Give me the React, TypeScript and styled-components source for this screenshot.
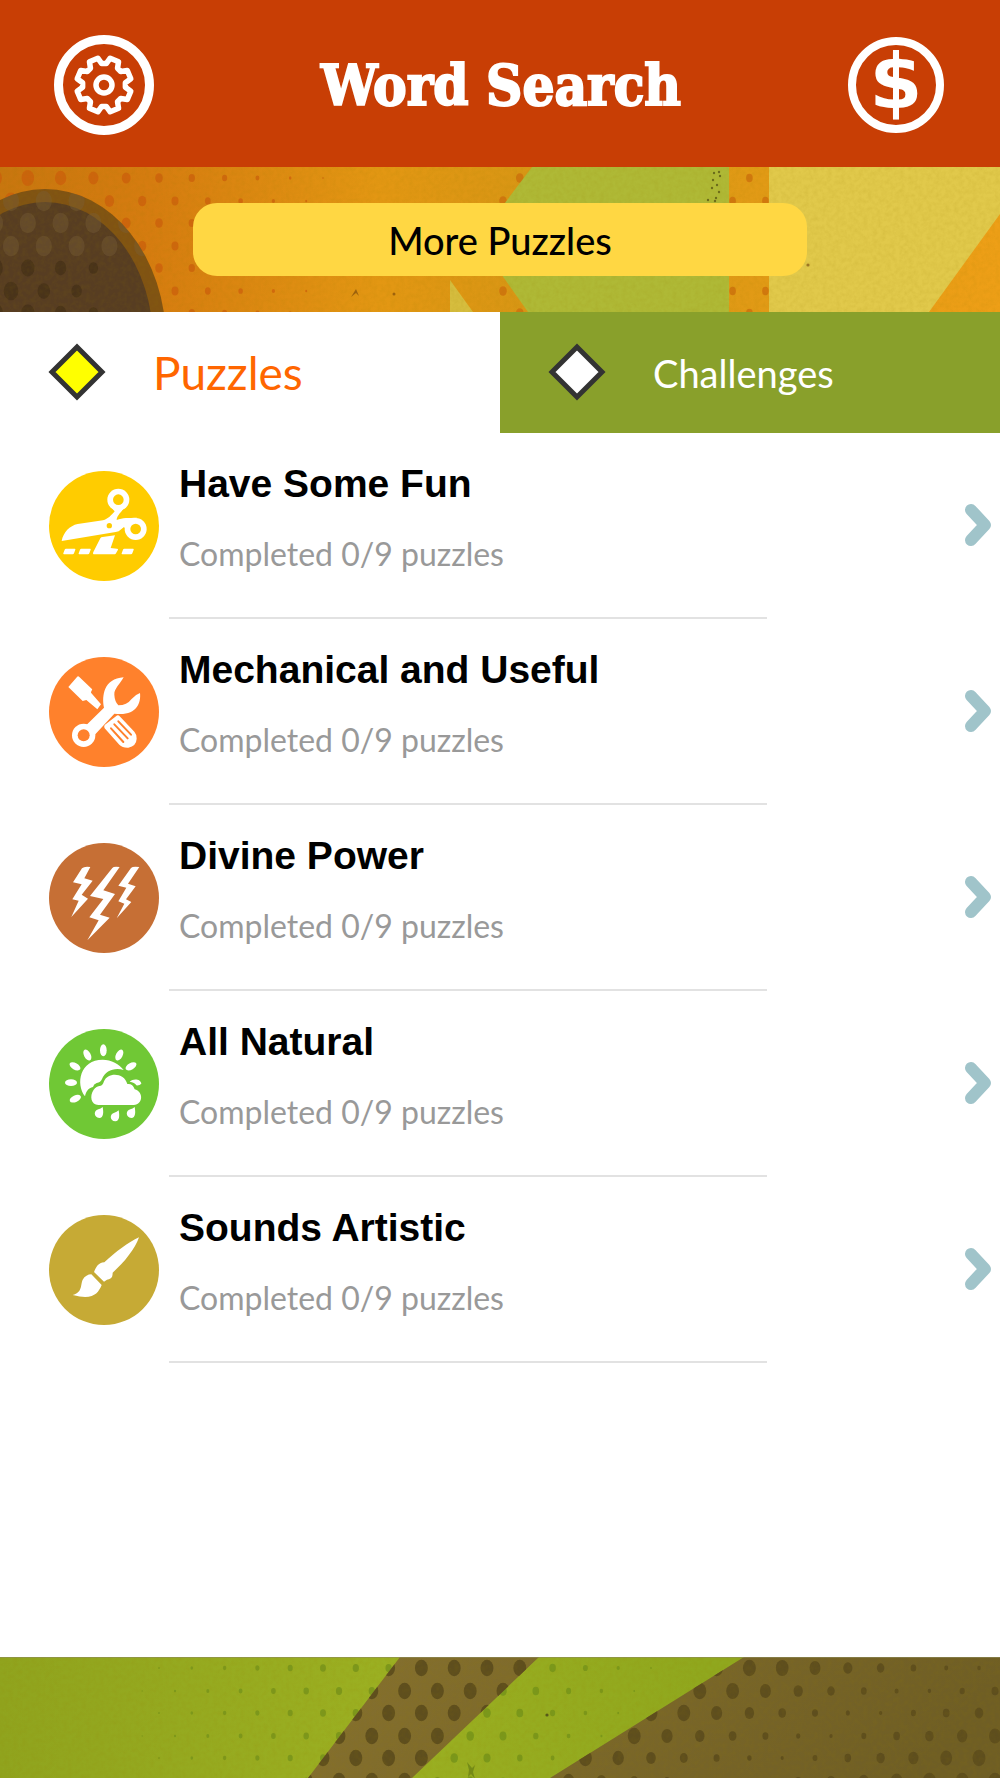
import React from "react";
import styled, { createGlobalStyle } from "styled-components";

const sans = `Lato, "Open Sans", sans-serif`;

const GlobalStyle = createGlobalStyle`
  *, *::before, *::after { box-sizing: border-box; }
  body { margin: 0; background: #fff; font-family: ${sans}; }
  button { font: inherit; border: 0; padding: 0; background: none; cursor: pointer; }
`;

const Page = styled.div`
  display: flex;
  flex-direction: column;
  min-height: 100vh;
`;

const Header = styled.header`
  display: flex;
  align-items: center;
  justify-content: space-between;
  padding: 35px 54px 32px;
  background: #c83e05;
  color: #fff;
`;

const Title = styled.h1`
  margin: 0;
  font: bold 56px/64px "DejaVu Serif Condensed", "DejaVu Serif", serif;
  -webkit-text-stroke: 2px #fff;
`;

const RoundButton = styled.button<{ $size: number }>`
  display: flex;
  align-items: center;
  justify-content: center;
  width: ${(p) => p.$size}px;
  height: ${(p) => p.$size}px;
  border-radius: 50%;
  color: #fff;
`;

const SettingsButton = styled(RoundButton)`
  border: 9px solid #fff;
`;

const CoinButton = styled(RoundButton)`
  margin-right: 2px;
  padding-bottom: 6px;
  border: 8px solid #fff;
  font: bold 76px/76px "DejaVu Sans", sans-serif;
`;

const Banner = styled.section`
  position: relative;
  display: flex;
  justify-content: center;
  padding: 36px 24px;
  overflow: hidden;
`;

const Backdrop = styled.svg`
  position: absolute;
  inset: 0;
  width: 100%;
  height: 100%;
`;

const MoreButton = styled.button`
  position: relative;
  width: 64.5%;
  height: 73px;
  border-radius: 24px;
  background: #ffd743;
  color: #000;
  && { font: 500 38px/72px ${sans}; }
`;

const Tabs = styled.nav`
  display: grid;
  grid-template-columns: 1fr 1fr;
`;

const Tab = styled.button<{ $active?: boolean }>`
  display: flex;
  align-items: center;
  gap: 46px;
  height: 121px;
  padding: 0 47px 2px;
  background: ${(p) => (p.$active ? "#fff" : "#89a02b")};
  color: ${(p) => (p.$active ? "#ff6600" : "#fff")};
  && { font: ${(p) => (p.$active ? "46px" : "38px")}/56px ${sans}; }
`;

const TabLabel = styled.span`
  padding-top: 2px;
`;

const List = styled.ul`
  flex: 1;
  margin: 0;
  padding: 0;
  list-style: none;
`;

const Row = styled.a`
  display: flex;
  align-items: center;
  height: 186px;
  padding: 0 8px 0 49px;
  gap: 10px;
  color: #000;
  text-decoration: none;
`;

const Body = styled.div`
  flex: 0 1 598px;
  align-self: stretch;
  padding: 27px 10px 0;
  border-bottom: 2px solid #e2e2e2;
`;

const Name = styled.h2`
  margin: 0 0 24px;
  font: bold 39px/48px "Liberation Sans", Arial, sans-serif;
`;

const Progress = styled.p`
  margin: 0;
  color: #999;
  font: 400 32px/44px ${sans};
`;

const Chevron = styled.svg`
  flex: none;
  margin-left: auto;
`;

const Footer = styled.footer`
  position: relative;
  height: 121px;
  overflow: hidden;
`;

type Dot = { x: number; y: number; r: number };

const rowTops = [11, 34, 56, 79, 101, 124, 146];

function dots(from: number, to: number, radius: (x: number, y: number) => number): Dot[] {
  const out: Dot[] = [];
  rowTops.forEach((y, row) => {
    for (let k = 0; k < 32; k++) {
      const x = (row % 2 ? 11 : -5) + k * 32.8;
      const r = radius(x, y);
      if (x >= from && x <= to && r > 0.5) out.push({ x, y, r });
    }
  });
  return out;
}

const Dots = ({ items, ...rest }: { items: Dot[] } & React.SVGProps<SVGGElement>) => (
  <g {...rest}>
    {items.map((d, i) => (
      <ellipse key={i} cx={d.x} cy={d.y} rx={d.r * 0.95} ry={d.r * 1.2} />
    ))}
  </g>
);

const Paper = ({ id }: { id: string }) => (
  <>
    <filter id={id} x="0" y="0" width="100%" height="100%">
      <feTurbulence type="fractalNoise" baseFrequency="0.22" numOctaves="3" seed="4" />
      <feColorMatrix values="0 0 0 0 .3  0 0 0 0 .2  0 0 0 0 0  0.5 0 0 0 -0.17" />
    </filter>
    <rect width="1000" height="146" filter={`url(#${id})`} opacity="0.4" />
  </>
);

const BannerArt = () => (
  <Backdrop viewBox="0 0 1000 145" preserveAspectRatio="xMidYMid slice" aria-hidden="true">
    <defs>
      <linearGradient id="orange">
        <stop offset="0" stopColor="#c8760f" />
        <stop offset=".15" stopColor="#d67c10" />
        <stop offset=".38" stopColor="#e39713" />
        <stop offset=".55" stopColor="#d79615" />
        <stop offset="1" stopColor="#ee9f17" />
      </linearGradient>
      <clipPath id="egg"><ellipse cx="45" cy="174" rx="121" ry="152" /></clipPath>
    </defs>
    <rect width="1000" height="145" fill="url(#orange)" />
    <Dots items={dots(-10, 345, (x) => 7.2 - x / 50)} fill="#cc5d0c" opacity=".7" />
    <Dots items={dots(500, 545, () => 4)} fill="#cc6a0c" opacity=".7" />
    <Dots items={dots(725, 770, () => 3.5)} fill="#cc6a0c" opacity=".7" />
    <ellipse cx="45" cy="174" rx="121" ry="152" fill="#805313" />
    <ellipse cx="45" cy="174" rx="108" ry="139" fill="#573d22" />
    <g clipPath="url(#egg)">
      <Dots items={dots(-10, 170, (_, y) => (y < 95 ? 8.5 : 0))} fill="#79603a" opacity=".4" />
      <Dots items={dots(-10, 100, (x, y) => (y > 95 ? 8 - x / 30 : 0))} fill="#432f17" opacity=".7" />
    </g>
    <path d="M532 0H729V145H528L477 73Z" fill="#afb936" />
    <path d="M769 0H1000V47L929 145H769Z" fill="#e1c94b" />
    <path d="M450 113V145H473Z" fill="#d6bd3e" />
    <g fill="#5c5a16" opacity=".8">
      {[[714, 6], [719, 5], [713, 13], [720, 9], [717, 18], [712, 21], [719, 25], [716, 31], [708, 33], [715, 34]].map(([x, y]) => (
        <circle key={`${x}-${y}`} cx={x} cy={y} r="1.2" />
      ))}
    </g>
    <g fill="#72400a" opacity=".6">
      <path d="M351 130l5-8 3 7-3-3z" />
      <circle cx="394" cy="127" r="1.5" />
      <circle cx="808" cy="98" r="1.6" />
    </g>
    <Paper id="paper-top" />
  </Backdrop>
);

const brown = "M400 0H539L412 121H308ZM744 0H1000V121H550Z";

const FooterArt = () => (
  <Backdrop viewBox="0 0 1000 121" preserveAspectRatio="xMidYMid slice" aria-hidden="true">
    <defs>
      <linearGradient id="green">
        <stop offset="0" stopColor="#90a41e" />
        <stop offset=".38" stopColor="#9bb022" />
        <stop offset=".7" stopColor="#90a81e" />
      </linearGradient>
      <linearGradient id="earth" x2="1" y2=".15">
        <stop offset="0" stopColor="#86712f" />
        <stop offset="1" stopColor="#6f5e25" />
      </linearGradient>
      <clipPath id="bands"><path d={brown} /></clipPath>
    </defs>
    <rect width="1000" height="121" fill="url(#green)" />
    <Dots items={dots(120, 450, (x) => Math.min(3.3, (x - 90) / 75))} fill="#7c981c" />
    <Dots items={dots(440, 700, (x, y) => Math.min(4, (690 - x - y * 0.6) / 38))} fill="#7a981b" />
    <path d={brown} fill="url(#earth)" />
    <g clipPath="url(#bands)">
      <Dots items={dots(300, 1000, (x, y) => Math.min(6.8, 1.5 + Math.abs(x - 990 + 2.1 * y) * 0.028))} fill="#5e4e1e" />
    </g>
    <path d="M467 105l5 6 3-3-2 7 2 7-4-5-3 3 1-7z" fill="#5b7413" opacity=".6" />
    <circle cx="547" cy="58" r="1.6" fill="#55591a" />
    <Paper id="paper-bottom" />
    <path d="M0 .5H1000" stroke="#8f8c5c" opacity=".6" />
  </Backdrop>
);

const polar = (r: number, deg: number) => {
  const a = (deg * Math.PI) / 180;
  return `${(r * Math.sin(a)).toFixed(2)} ${(-r * Math.cos(a)).toFixed(2)}`;
};

const gearPath =
  "M" +
  Array.from({ length: 8 }, (_, k) => k * 45)
    .map((a) => [polar(21.5, a - 6), polar(21.5, a + 6), polar(27.5, a + 13), polar(27.5, a + 32)].join("L"))
    .join("L") +
  "Z";

const GearIcon = () => (
  <svg width="64" height="64" viewBox="-32 -32 64 64" fill="none" stroke="#fff" strokeWidth="5.5" strokeLinejoin="round" aria-hidden="true">
    <path d={gearPath} />
    <circle r="8" />
  </svg>
);

const Diamond = ({ fill }: { fill: string }) => (
  <svg width="60" height="58" viewBox="0 0 60 58" aria-hidden="true">
    <path d="M30 4L55 29L30 54L5 29Z" fill={fill} stroke="#333" strokeWidth="5" />
  </svg>
);

const dash = "h26q3 0 2 3l-4 11q-1 3-4 3h-26q-3 0-2-3l4-11q1-3 4-3z";

const Scissors = ({ color }: { color: string }) => (
  <>
    <path d="M64 241C69 215 88 195 112 190L188 179C203 175 214 163 223 152L216 144L250 142C247 151 229 164 229 178C247 170 265 172 290 171L256 205L251 199L235 212L226 214Z" />
    <circle cx="234" cy="117" r="33" />
    <circle cx="286" cy="205" r="33" />
    <path d={`M77 264${dash}`} />
    <path d={`M123 264${dash}`} />
    <path d={`M252 264${dash}`} />
    <path d="M180 233Q182 229 187 229L224 224L211 262L230 264q4 0 3 3l-6 11q-1 3-4 3H162q-6 0-3-7z" />
    <g fill={color}>
      <circle cx="234" cy="117" r="16" />
      <circle cx="286" cy="205" r="16" />
      <circle cx="207" cy="195" r="8" />
    </g>
  </>
);

const Tools = ({ color }: { color: string }) => (
  <>
    <path d="M84 125L110 95Q113 91 117 95L154 130Q158 133 153 137L152 142L182 177L171 192L138 164L127 167Z" />
    <path d="M193 239Q190 245 193 249L237 298Q247 308 264 307Q288 302 289 280Q290 268 282 259L238 213Q233 207 227 213Z" />
    <path d="M136 241L191 187C184 152 190 100 250 96C240 115 221 130 222 148Q223 168 234 180Q260 180 273 162Q284 148 299 143C303 176 285 214 222 205L160 272Z" />
    <circle cx="130" cy="270" r="35" />
    <circle cx="130" cy="270" r="18" fill={color} />
    <path d="M212 249L249 290M222 237L262 279M234 228L272 268" stroke={color} strokeWidth="6" strokeLinecap="round" />
  </>
);

const Bolts = () => (
  <>
    <path d="M125 114L98 156L124 162L96 207L115 211L93 260L143 205L124 193L157 151L132 144L150 110Q132 107 125 114Z" />
    <path d="M216 113L149 197L189 206L147 261L175 270L141 330L208 262L179 253L224 191L189 180L238 110Q220 107 216 113Z" />
    <path d="M272 113L234 166L258 172L234 213L252 220L229 264L273 215L257 207L286 168L263 160L297 110Q277 107 272 113Z" />
  </>
);

const Weather = () => (
  <>
    <path d="M134 243C105 205 119 133 187 133C213 133 237 146 250 164C222 156 195 166 185 191Q181 202 169 203Q160 206 158 215C144 218 137 228 134 243Z" />
    <path d="M174 269C152 268 147 242 160 223Q167 212 181 211Q186 212 191 198C201 170 252 170 261 206Q277 204 283 222C309 228 310 268 280 269Z" />
    {[[189, 105, 0], [141, 119, -27], [237, 119, 27], [104, 153, -60], [272, 153, 60], [92, 202, 90], [105, 250, 65]].map(([x, y, turn]) => (
      <ellipse key={`${x}-${y}`} cx={x} cy={y} rx="10" ry="18" transform={`rotate(${turn} ${x} ${y})`} />
    ))}
    <path d="M268 199C280 188 302 192 303 205Q298 211 288 210Q283 201 268 199Z" />
    {[[0, 0], [48, 10], [96, 0]].map(([x, y]) => (
      <path key={x} transform={`translate(${x} ${y})`} d="M187 275C190 291 190 307 177 308C160 306 159 286 174 282Q181 280 187 275Z" />
    ))}
  </>
);

const Brush = () => (
  <>
    <path d="M296 111C285 145 250 188 217 217C217 236 208 235 200 238L191 244L161 215C168 200 173 187 192 186C225 155 265 125 296 111Z" />
    <path d="M153 222L184 254C173 280 158 300 97 284C128 275 120 252 127 238C133 228 143 222 153 222Z" />
  </>
);

const packs = [
  { name: "Have Some Fun", color: "#ffcc00", top: 31, Art: Scissors },
  { name: "Mechanical and Useful", color: "#ff812c", top: 35, Art: Tools },
  { name: "Divine Power", color: "#c66f35", top: 38, Art: Bolts },
  { name: "All Natural", color: "#70c835", top: 41, Art: Weather },
  { name: "Sounds Artistic", color: "#c6aa35", top: 44, Art: Brush },
];

export default function App() {
  return (
    <Page>
      <GlobalStyle />
      <Header>
        <SettingsButton $size={100} aria-label="Settings">
          <GearIcon />
        </SettingsButton>
        <Title>Word Search</Title>
        <CoinButton $size={96} aria-label="Coins">$</CoinButton>
      </Header>
      <Banner>
        <BannerArt />
        <MoreButton>More Puzzles</MoreButton>
      </Banner>
      <Tabs>
        <Tab $active aria-pressed="true">
          <Diamond fill="#ffff00" />
          <TabLabel>Puzzles</TabLabel>
        </Tab>
        <Tab aria-pressed="false">
          <Diamond fill="#fff" />
          <TabLabel>Challenges</TabLabel>
        </Tab>
      </Tabs>
      <List>
        {packs.map(({ name, color, top, Art }) => (
          <li key={name}>
            <Row href="#">
              <svg width="110" height="110" viewBox={`26 ${top} 330 330`} fill="#fff" aria-hidden="true">
                <circle cx="191" cy={top + 165} r="165" fill={color} />
                <Art color={color} />
              </svg>
              <Body>
                <Name>{name}</Name>
                <Progress>Completed 0/9 puzzles</Progress>
              </Body>
              <Chevron width="28" height="44" viewBox="0 0 28 44" fill="none" stroke="#a0c4ca" strokeWidth="12" strokeLinecap="round" strokeLinejoin="round" aria-hidden="true">
                <path d="M7 6L21 21L7 36" />
              </Chevron>
            </Row>
          </li>
        ))}
      </List>
      <Footer>
        <FooterArt />
      </Footer>
    </Page>
  );
}
